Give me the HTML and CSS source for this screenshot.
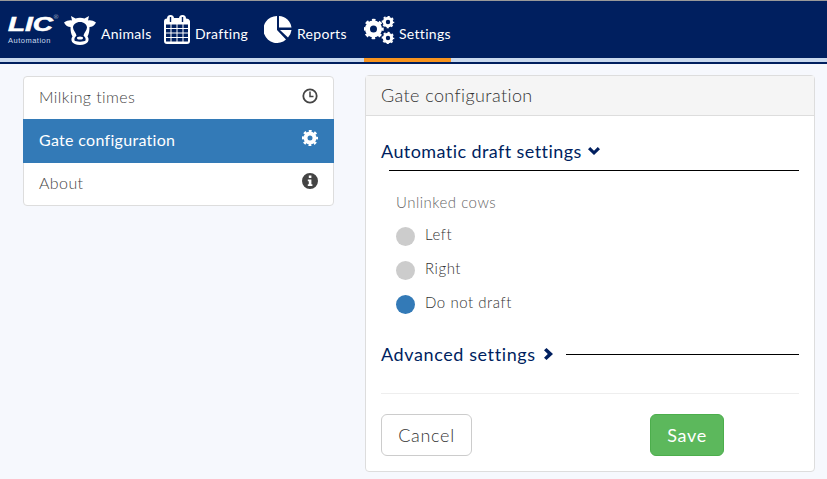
FILE: index.html
```html
<!DOCTYPE html>
<html lang="en">
<head>
    <meta charset="UTF-8">
    <title>Gate configuration</title>
    <link rel="stylesheet" href="styles.css">
</head>
<body>
    <header class="topbar">
        <nav class="nav">
            <div class="logo">
                <span class="logo-mark">LIC</span>
                <span class="logo-reg">®</span>
                <span class="logo-sub">Automation</span>
            </div>
            <a class="nav-item">
                <svg class="nav-icon" width="32" height="31" viewBox="0 0 32 31">
                    <path fill="#fff" d="M0 8.500c3-2 5.500-2.500 8-2L7 2l4.500 2.500c3-1 6-1 9 0L25 2l-1 4.500c2.500-.5 5 0 8 2-1.500 3-4 4.500-6.500 4.500 0 4-.5 7-2 9.500 2.500 3 1 8.500-7.500 8.500S6 25.500 8.500 22.500c-1.500-2.500-2-5.500-2-9.500C4 13 1.500 11.500 0 8.500z"/>
                    <path fill="#001f5f" d="M16 8c4 0 7 2.500 7 5.500 0 3-3 5-3.500 8 1.500 1.500 2.500 3 2 5-1 1.500-10 1.500-11 0-.5-2 .5-3.500 2-5-.5-3-3.500-5-3.500-8C9 10.500 12 8 16 8z"/>
                    <ellipse fill="#fff" cx="16" cy="24" rx="3" ry="1.500"/>
                </svg>
                <span>Animals</span>
            </a>
            <a class="nav-item">
                <svg class="nav-icon" width="26" height="29" viewBox="0 0 26 29">
                    <path fill="#fff" d="M3 3.500A3.500 3.500 0 0 1 10 3.500V3h5v.5a3.500 3.500 0 0 1 7 0c2 0 4 1 4 3V26a3 3 0 0 1-3 3H3a3 3 0 0 1-3-3V6.500c0-2 1-3 3-3z"/>
                    <g fill="#001f5f">
                        <rect x="5.800" y="2" width="1.400" height="5"/><rect x="17.800" y="2" width="1.400" height="5"/>
                        <rect x="2" y="9.500" width="4.500" height="3.500"/><rect x="7.500" y="9.500" width="5" height="3.500"/><rect x="13.500" y="9.500" width="5" height="3.500"/><rect x="19.500" y="9.500" width="4.500" height="3.500"/>
                        <rect x="2" y="14" width="4.500" height="3.500"/><rect x="7.500" y="14" width="5" height="3.500"/><rect x="13.500" y="14" width="5" height="3.500"/><rect x="19.500" y="14" width="4.500" height="3.500"/>
                        <rect x="2" y="18.500" width="4.500" height="3.500"/><rect x="7.500" y="18.500" width="5" height="3.500"/><rect x="13.500" y="18.500" width="5" height="3.500"/><rect x="19.500" y="18.500" width="4.500" height="3.500"/>
                        <rect x="2" y="23" width="4.500" height="3.500"/><rect x="7.500" y="23" width="5" height="3.500"/><rect x="13.500" y="23" width="5" height="3.500"/><rect x="19.500" y="23" width="4.500" height="3.500"/>
                    </g>
                </svg>
                <span>Drafting</span>
            </a>
            <a class="nav-item">
                <svg class="nav-icon" width="28" height="27" viewBox="0 0 28 27">
                    <path fill="#fff" d="M13 0v14l9 9.500A13.500 13.500 0 1 1 13 0z"/>
                    <path fill="#fff" d="M15 0a13 13 0 0 1 12.500 11.500H15z"/>
                    <path fill="#fff" d="M16 14h11.500a13 13 0 0 1-3.500 7.500z"/>
                </svg>
                <span>Reports</span>
            </a>
            <a class="nav-item nav-item-settings">
                <svg class="nav-icon" width="31" height="28" viewBox="0 0 31 28">
                    <g fill="none" stroke="#fff">
                        <circle cx="9.500" cy="13" r="6" stroke-width="5"/>
                        <circle cx="9.500" cy="13" r="9" stroke-width="2.500" stroke-dasharray="3.530 3.530" stroke-dashoffset="1.760"/>
                        <circle cx="24" cy="6" r="3.700" stroke-width="3"/>
                        <circle cx="24" cy="6" r="5.500" stroke-width="1.600" stroke-dasharray="2.160 2.160" stroke-dashoffset="1.080"/>
                        <circle cx="24" cy="22" r="3.700" stroke-width="3"/>
                        <circle cx="24" cy="22" r="5.500" stroke-width="1.600" stroke-dasharray="2.160 2.160" stroke-dashoffset="1.080"/>
                    </g>
                </svg>
                <span>Settings</span>
            </a>
        </nav>
        <div class="nav-rule"></div>
    </header>

    <main class="content">
        <ul class="side-menu">
            <li class="side-item">
                <span>Milking times</span>
                <svg class="side-icon" viewBox="0 0 16 16">
                    <circle cx="8" cy="8" r="6.700" fill="none" stroke="currentColor" stroke-width="1.800"/>
                    <path d="M8 3.500v5h3.500" fill="none" stroke="currentColor" stroke-width="1.500"/>
                </svg>
            </li>
            <li class="side-item is-active">
                <span>Gate configuration</span>
                <svg class="side-icon" viewBox="0 0 16 16">
                    <g fill="none" stroke="currentColor">
                        <circle cx="8" cy="8" r="4.500" stroke-width="4"/>
                        <circle cx="8" cy="8" r="7" stroke-width="2.500" stroke-dasharray="2.750 2.750" stroke-dashoffset="1.375"/>
                    </g>
                </svg>
            </li>
            <li class="side-item">
                <span>About</span>
                <svg class="side-icon" viewBox="0 0 16 16">
                    <path fill="currentColor" fill-rule="evenodd" d="M8 0a8 8 0 1 1 0 16A8 8 0 0 1 8 0zM6.800 2.500v2.600h2.600V2.500zM5.800 6.500v1.700h1v3H5.800v1.700h4.600v-1.700h-1V6.500z"/>
                </svg>
            </li>
        </ul>

        <section class="panel">
            <h2 class="panel-head">Gate configuration</h2>
            <div class="panel-body">
                <div class="fold fold-open">
                    <h3 class="fold-title">Automatic draft settings
                        <svg class="chev" width="12" height="8" viewBox="0 0 12 8"><path fill="currentColor" d="M0 2.200 2.200 0 6 3.800 9.800 0 12 2.200 6 8z"/></svg>
                    </h3>
                </div>
                <div class="options">
                    <div class="options-label">Unlinked cows</div>
                    <label class="option"><span class="dot"></span><span class="option-text">Left</span></label>
                    <label class="option"><span class="dot"></span><span class="option-text">Right</span></label>
                    <label class="option"><span class="dot dot-on"></span><span class="option-text">Do not draft</span></label>
                </div>
                <div class="fold fold-closed">
                    <h3 class="fold-title fold-title-closed">Advanced settings
                        <svg class="chev" width="9" height="12" viewBox="0 0 9 12"><path fill="currentColor" d="M2.500 0 9 6l-6.500 6L0 9.800 3.800 6 0 2.200z"/></svg>
                    </h3>
                    <div class="fold-line"></div>
                </div>
                <div class="actions">
                    <button class="btn btn-cancel">Cancel</button>
                    <button class="btn btn-save">Save</button>
                </div>
            </div>
        </section>
    </main>
</body>
</html>
```

FILE: styles.css
```css
html, body {
    margin: 0;
    padding: 0;
    height: 479px;
    overflow: hidden;
}
body {
    font-family: "Lato", sans-serif;
    font-weight: 300;
    background-color: #f6f8fd;
    color: #333;
    font-size: 16px;
}
.topbar {
    border-top: 1px solid #999;
    background-color: #001f5f;
    height: 63px;
}
.nav {
    display: flex;
    height: 57px;
    padding-left: 8px;
    color: #fff;
}
.nav-rule {
    height: 4px;
    background-color: #c9d9ee;
    position: relative;
}
.nav-rule::after {
    content: "";
    position: absolute;
    left: 364px;
    width: 87px;
    top: 0;
    height: 4px;
    background-color: #f7931e;
}

/* logo */
.logo {
    display: flex;
    flex-direction: column;
    width: 56px;
    padding-top: 11px;
    position: relative;
}
.logo-mark {
    font: italic 700 21px/24px "Liberation Sans", sans-serif;
    -webkit-text-stroke: 0.6px #fff;
    transform: scaleX(1.33);
    transform-origin: left;
}
.logo-reg {
    position: absolute;
    left: 45.500px;
    top: 12px;
    font-size: 6px;
    line-height: 8px;
}
.logo-sub {
    font: 7.500px/9px "Liberation Sans", sans-serif;
    letter-spacing: 0.5px;
    color: #c9d9ee;
}

/* nav links */
.nav-item {
    display: flex;
    align-items: center;
    gap: 5px;
    width: 100px;
    font-size: 14px;
    font-weight: 400;
    letter-spacing: 0.3px;
    white-space: nowrap;
}
.nav-item span {
    padding-top: 7px;
}
.nav-item-settings {
    gap: 4px;
}

/* left menu */
.side-menu {
    list-style: none;
    margin: 1px 0 0;
    padding: 0;
    width: 309px;
    background-color: #fff;
    border: 1px solid #ddd;
    border-radius: 4px;
    align-self: flex-start;
    color: #444;
}
.side-item {
    display: flex;
    justify-content: space-between;
    height: 42px;
    padding: 0 15px;
    line-height: 39px;
    font-size: 16px;
    letter-spacing: 0.4px;
}
.side-item.is-active {
    height: 44px;
    line-height: 41px;
    background-color: #337ab7;
    color: #fff;
    font-weight: 400;
    letter-spacing: 0.3px;
    margin: 0 -1px;
    padding: 0 16px;
}
.side-icon {
    width: 16px;
    height: 16px;
    margin-top: 11px;
}
.side-item:last-child .side-icon {
    margin-top: 10px;
}

/* right panel */
.content {
    display: flex;
    gap: 31px;
    padding: 11px 12px 0 23px;
}
.panel {
    flex: 1;
    height: 395px;
    background-color: #fff;
    border: 1px solid #ddd;
    border-radius: 4px;
}
.panel-head {
    margin: 0;
    height: 39px;
    padding-left: 15px;
    line-height: 39px;
    font-size: 18px;
    font-weight: 300;
    letter-spacing: 0.4px;
    background-color: #f5f5f5;
    border-bottom: 1px solid #ddd;
}
.panel-body {
    padding: 0 15px;
}
.fold-title {
    display: inline-flex;
    align-items: center;
    gap: 6px;
    margin: 0;
    height: 22px;
    font-size: 18px;
    font-weight: 400;
    letter-spacing: 0.42px;
    color: #001f5f;
    white-space: nowrap;
}
.fold-title-closed {
    gap: 8px;
    letter-spacing: 0.6px;
}
.fold-open {
    margin-top: 24px;
    padding-bottom: 8px;
}
.fold-open::after {
    content: "";
    display: block;
    height: 1px;
    margin: 8px 0 0 8px;
    background-color: #000;
}
.fold-closed {
    display: flex;
    align-items: center;
    gap: 13px;
    margin-top: 22px;
}
.fold-line {
    flex: 1;
    height: 1px;
    background-color: #000;
}
.options {
    padding: 14px 0 0 15px;
}
.options-label {
    color: #666;
    height: 26px;
    font-size: 15px;
    letter-spacing: 0.5px;
}
.option {
    display: flex;
    align-items: center;
    gap: 10px;
    height: 34px;
    font-size: 15px;
    letter-spacing: 0.55px;
}
.option-text {
    padding-bottom: 4px;
}
.dot {
    width: 19px;
    height: 19px;
    border-radius: 50%;
    background-color: #ccc;
}
.dot-on {
    background-color: #337ab7;
}
.actions {
    display: flex;
    margin-top: 28px;
    padding-top: 20px;
    border-top: 1px solid #eee;
    gap: 178px;
}
.btn {
    font: 300 18px "Lato", sans-serif;
    letter-spacing: 0.7px;
    height: 42px;
    border-radius: 6px;
    padding: 0;
    border: 1px solid #ccc;
}
.btn-cancel {
    width: 91px;
    background-color: #fff;
    color: #333;
}
.btn-save {
    width: 74px;
    background-color: #5cb85c;
    border-color: #4cae4c;
    color: #fff;
    font-weight: 400;
}
```
